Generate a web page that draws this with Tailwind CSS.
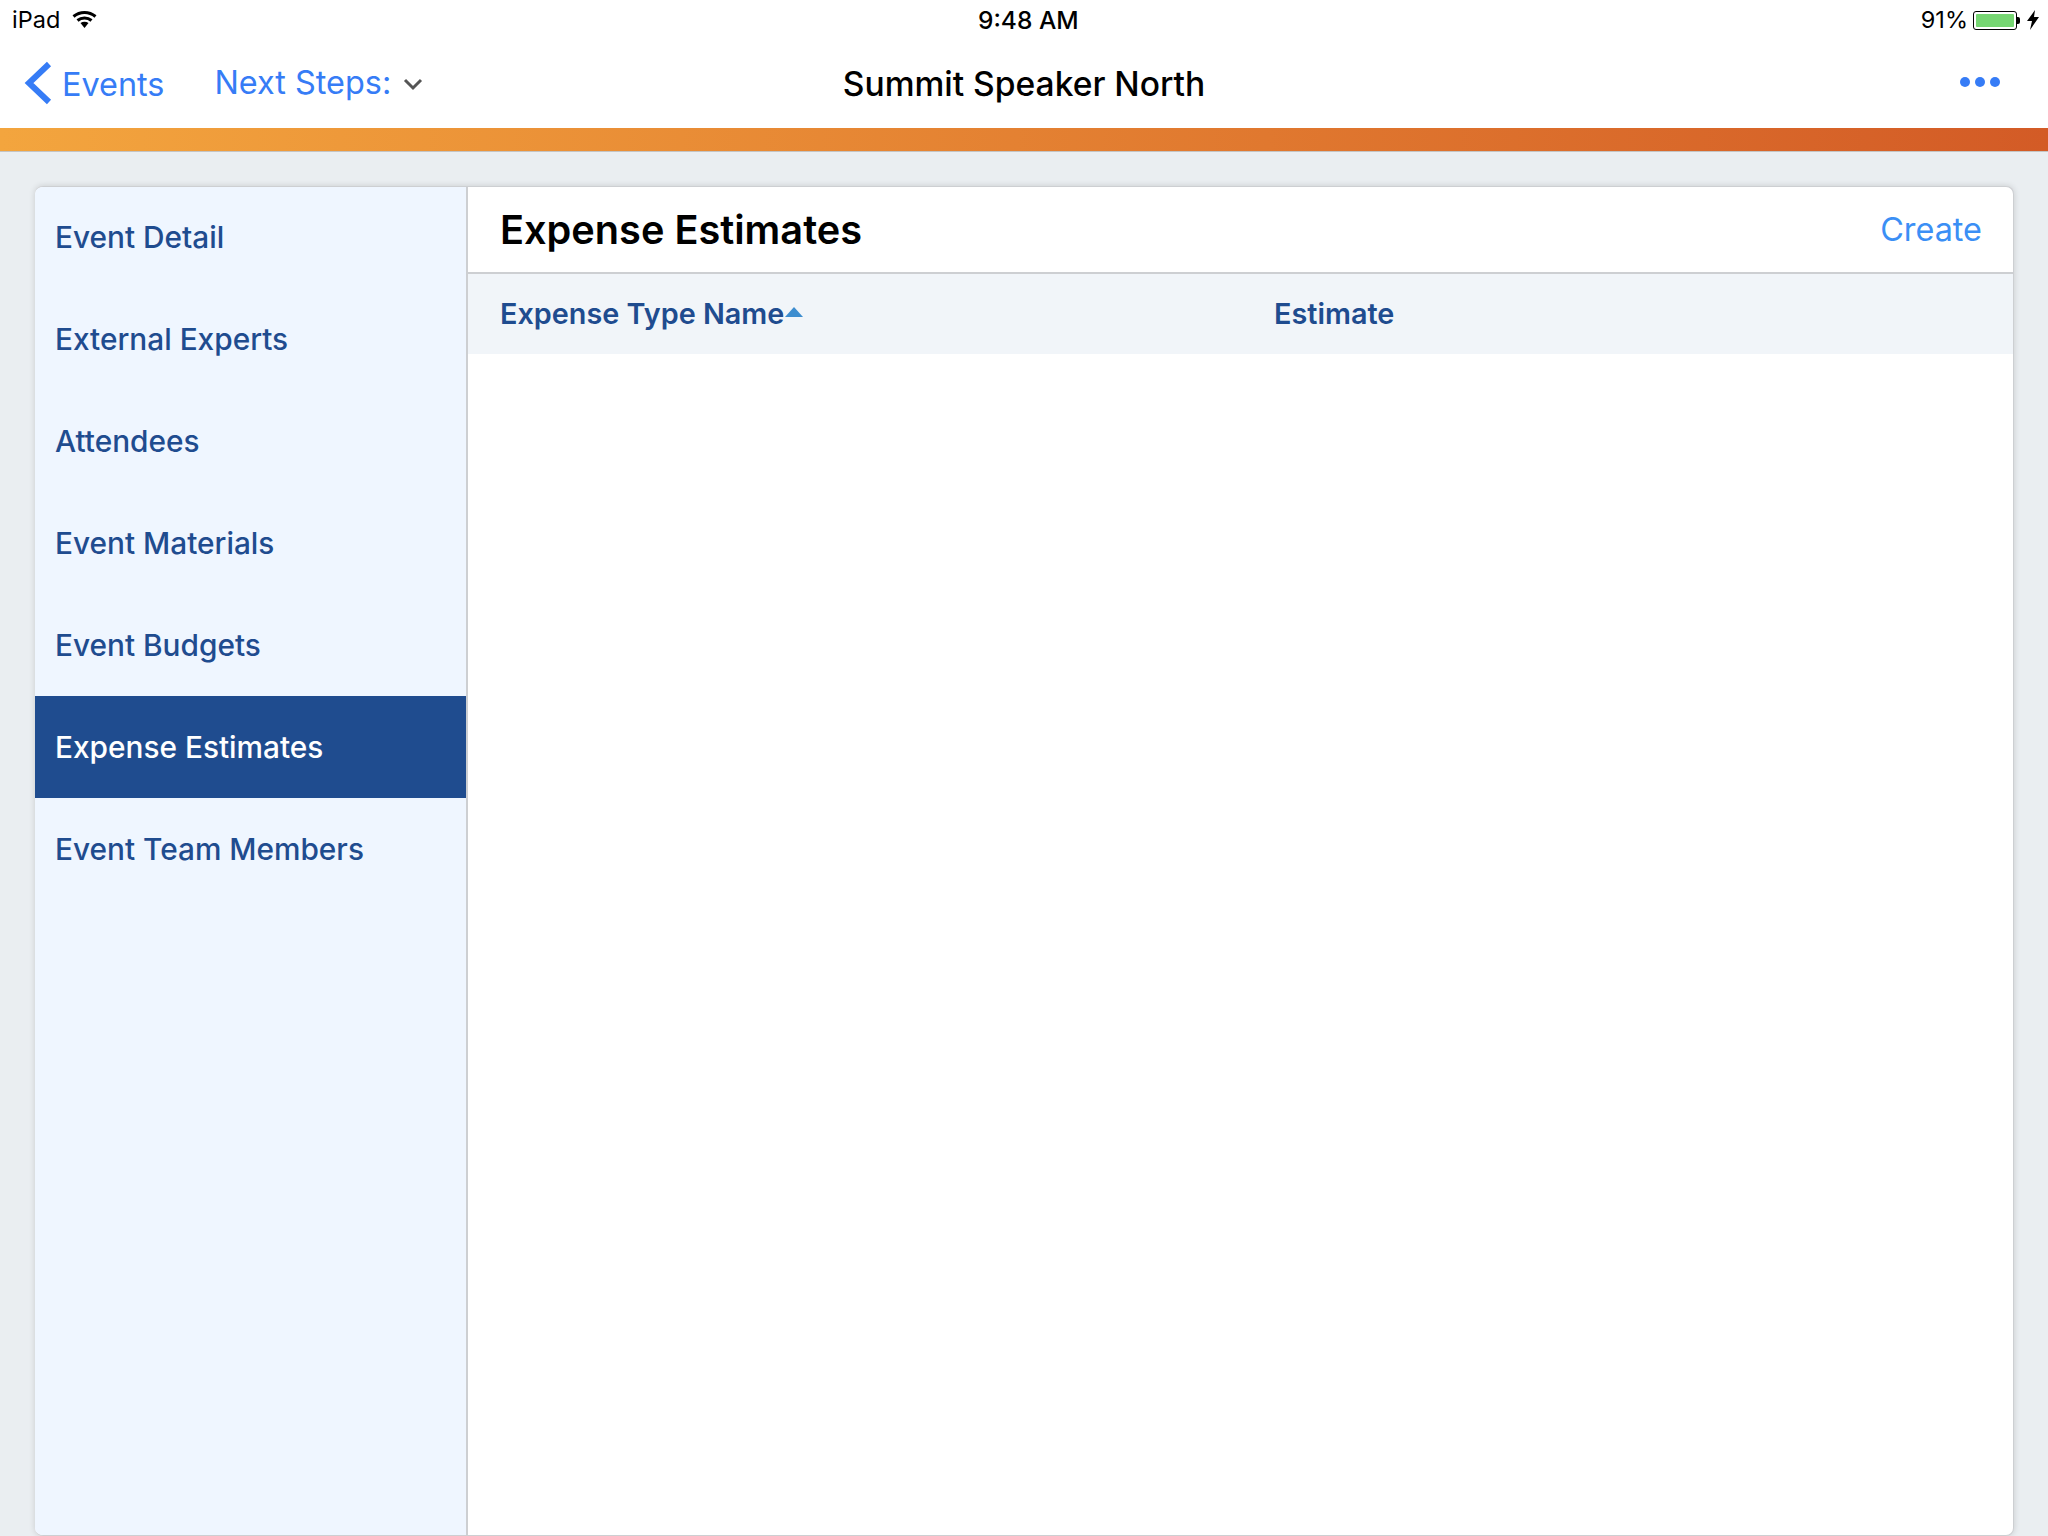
<!DOCTYPE html>
<html lang="en">
<head>
    <meta charset="UTF-8">
    <title>Expense Estimates</title>
    <script src="https://cdn.jsdelivr.net/npm/@tailwindcss/browser@4"></script>
</head>
<body class="bg-[#eaeef1] font-['Inter',sans-serif] w-[2048px] h-[1536px] overflow-hidden flex flex-col">
    <!-- Status bar -->
    <div class="h-[40px] bg-white flex items-center justify-between pl-[12px] pr-[9px] text-[23.5px] text-black relative">
        <div class="flex items-center gap-[12px]">
            <span>iPad</span>
            <svg width="25" height="19" viewBox="0 0 25 19" fill="none" class="mb-[2px]">
                <path d="M1.5 6.5 C8 1 17 1 23.5 6.5" stroke="#000" stroke-width="3"/>
                <path d="M5.5 10.5 C9.5 7 15.5 7 19.5 10.5" stroke="#000" stroke-width="3"/>
                <path d="M8.5 13 C11 11.3 14 11.3 16.5 13 L12.5 18 Z" fill="#000"/>
            </svg>
        </div>
        <span class="absolute left-[978px] text-[24.5px] font-medium">9:48 AM</span>
        <div class="flex items-center">
            <span>91%</span>
            <div class="ml-[5px] w-[44px] h-[19px] border border-black rounded-[3px] p-[2px]">
                <div class="w-full h-full bg-[#76d672] rounded-[1px]"></div>
            </div>
            <div class="w-[3px] h-[7px] bg-black rounded-r-[2px]"></div>
            <svg width="12" height="20" viewBox="0 0 12 20" class="ml-[7px]"><path d="M8 0 L0 11 H5 L3 20 L12 7 H7 Z" fill="#000"/></svg>
        </div>
    </div>

    <!-- Nav bar -->
    <div class="h-[88px] bg-white flex items-center relative">
        <svg width="28" height="44" viewBox="0 0 28 44" fill="none" class="ml-[24px] mb-[2px]">
            <path d="M25 3 L5 22 L25 41" stroke="#367cf6" stroke-width="6"/>
        </svg>
        <span class="ml-[10px] text-[32.4px] text-[#367cf6] mt-[2px]">Events</span>
        <span class="ml-[50px] text-[32.4px] text-[#367cf6] mt-[-1px]">Next Steps:</span>
        <svg width="20" height="13" viewBox="0 0 20 13" fill="none" class="ml-[12px] mt-[1px]">
            <path d="M2 2 L10 10 L18 2" stroke="#555" stroke-width="3"/>
        </svg>
        <span class="absolute left-0 right-0 text-center text-[33.6px] font-medium text-black pointer-events-none">Summit Speaker North</span>
        <div class="ml-auto mr-[48px] flex gap-[5px] mt-[-5px]">
            <div class="w-[10px] h-[10px] rounded-full bg-[#367cf6]"></div>
            <div class="w-[10px] h-[10px] rounded-full bg-[#367cf6]"></div>
            <div class="w-[10px] h-[10px] rounded-full bg-[#367cf6]"></div>
        </div>
    </div>

    <!-- Gradient strip -->
    <div class="h-[24px] bg-linear-to-r from-[#f3a53e] to-[#d35b26] border-b border-[#c4c4c4]"></div>

    <!-- Card -->
    <div class="flex-1 pt-[34px] pl-[35px] pr-[34px]">
        <div class="h-full flex bg-white rounded-[8px] overflow-hidden border-t border-b border-r border-[#cdcfd2] shadow-[0_0_6px_rgba(0,0,0,0.15)]">
            <div class="w-[431px] shrink-0 bg-[#eff6ff] text-[29.8px] font-medium text-[#1f4c8f]">
                <div class="h-[101px] pl-[20px] flex items-center">Event Detail</div>
                <div class="h-[102px] pl-[20px] flex items-center">External Experts</div>
                <div class="h-[102px] pl-[20px] flex items-center">Attendees</div>
                <div class="h-[102px] pl-[20px] flex items-center">Event Materials</div>
                <div class="h-[102px] pl-[20px] flex items-center">Event Budgets</div>
                <div class="h-[102px] pl-[20px] flex items-center bg-[#1f4c8f] text-white">Expense Estimates</div>
                <div class="h-[102px] pl-[20px] flex items-center">Event Team Members</div>
            </div>
            <div class="flex-1 border-l-2 border-[#cdcfd2]">
                <div class="h-[87px] flex items-center justify-between pl-[32px] pr-[31px] border-b-2 border-[#cdcfd2]">
                    <span class="text-[39.7px] font-semibold text-black mt-[2px]">Expense Estimates</span>
                    <span class="text-[32.4px] text-[#3b8ff5] mt-[2px]">Create</span>
                </div>
                <div class="h-[80px] bg-[#f1f5f9] flex items-center text-[28.8px] font-semibold text-[#1f4c8f]">
                    <div class="w-[806px] pl-[32px] flex items-center">
                        <span>Expense Type Name</span>
                        <svg width="20" height="12" viewBox="0 0 20 12" class="mb-[2px]"><path d="M10 0 L19 10 H1 Z" fill="#3d8dcf"/></svg>
                    </div>
                    <div>Estimate</div>
                </div>
            </div>
        </div>
    </div>
</body>
</html>
